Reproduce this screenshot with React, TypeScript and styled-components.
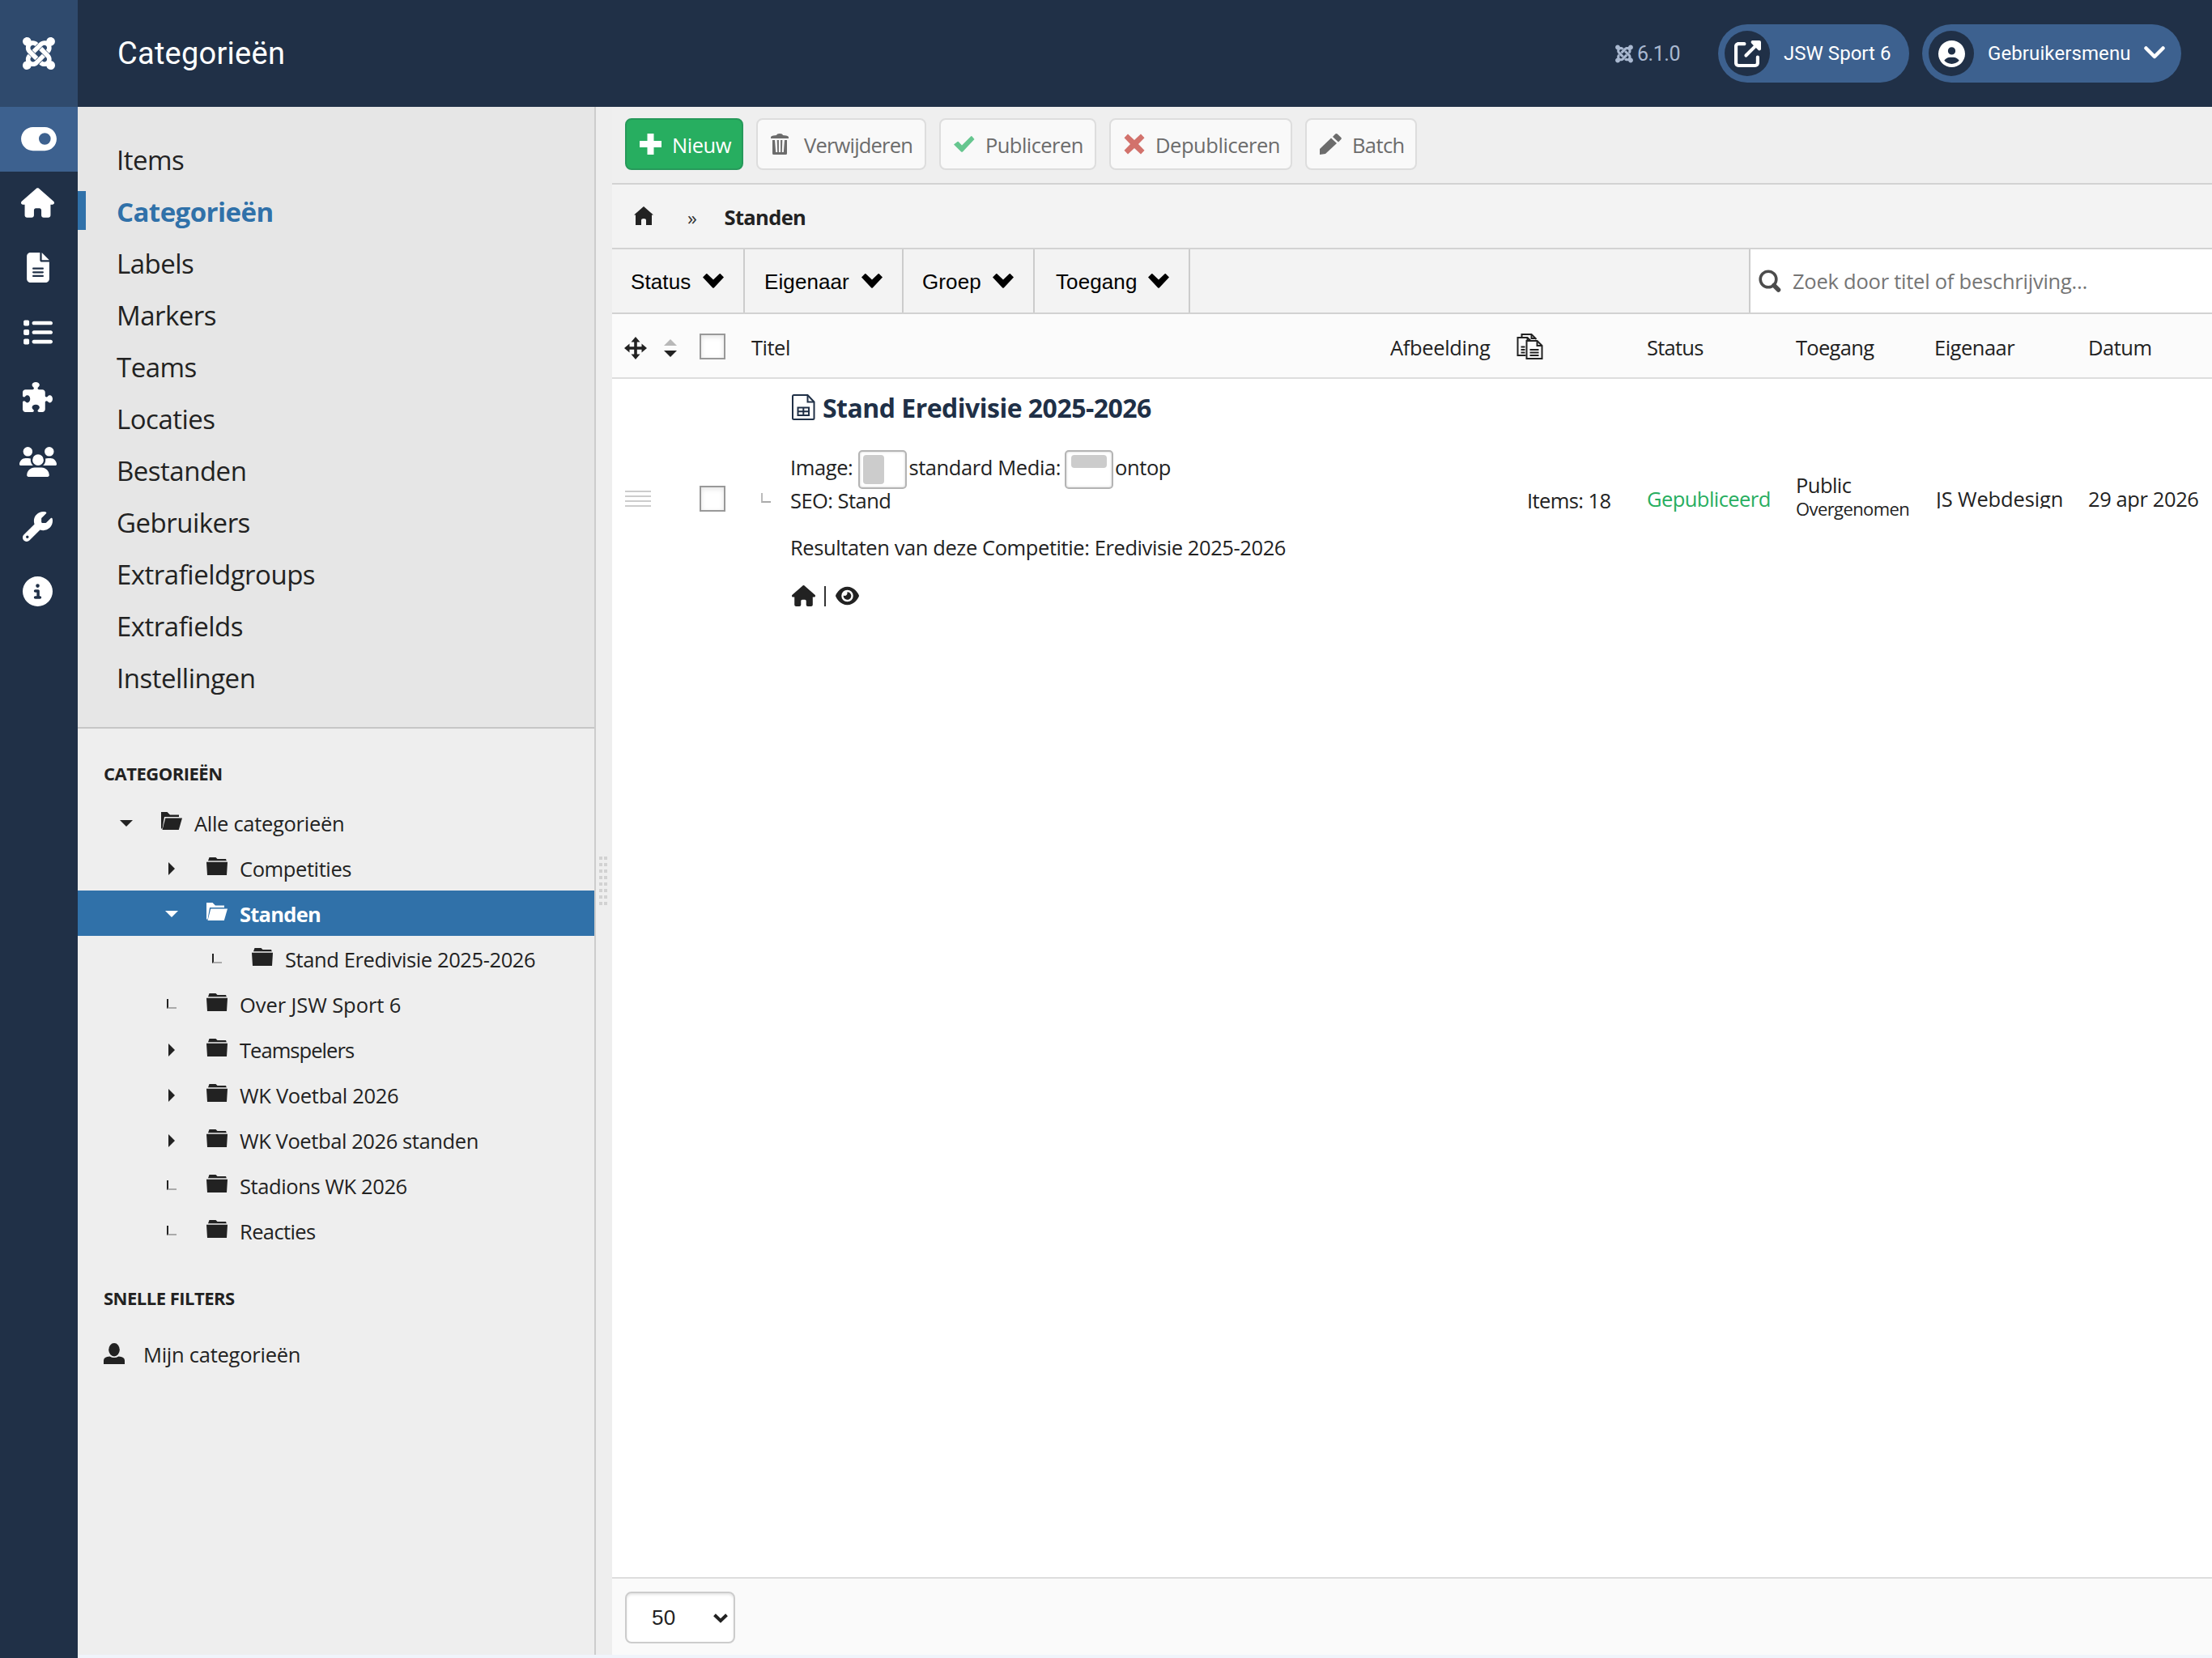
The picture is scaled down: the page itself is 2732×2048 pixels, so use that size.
import React from "react";
import styled, { createGlobalStyle, css } from "styled-components";
import {
  FaJoomla,
  FaToggleOn,
  FaHouse,
  FaFileLines,
  FaList,
  FaPuzzlePiece,
  FaUsers,
  FaWrench,
  FaCircleInfo,
  FaCircleUser,
  FaUpRightFromSquare,
  FaEye,
} from "react-icons/fa6";

const colors = {
  navy: "#203047",
  brand: "#2f4a6d",
  accent: "#3d618f",
  link: "#3071a9",
  text: "#222",
  line: "#ccc",
  soft: "#ddd",
  green: "#27ae60",
};

const GlobalStyle = createGlobalStyle`
  * { box-sizing: border-box; }
  body {
    margin: 0;
    background: #f0f4fb;
    color: ${colors.text};
    font-family: "Open Sans", "Noto Sans", sans-serif;
    font-size: 25.5px;
    letter-spacing: -0.4px;
    overflow: hidden;
  }
  svg { display: block; flex: none; }
`;

/* ---------- page shell ---------- */

const Page = styled.div`
  width: 2732px;
  height: 2048px;
  display: flex;
  flex-direction: column;
`;

const Header = styled.header`
  height: 132px;
  flex: none;
  display: flex;
  align-items: center;
  background: ${colors.navy};
  color: #fff;
  font-family: Roboto, sans-serif;
  letter-spacing: 0;
`;

const Brand = styled.div`
  width: 96px;
  height: 132px;
  display: flex;
  align-items: center;
  justify-content: center;
  background: ${colors.brand};
  svg { width: 40px; height: 46px; }
`;

const PageTitle = styled.h1`
  margin: 0 auto 0 49px;
  font-size: 38px;
  font-weight: 400;
  line-height: 132px;
  letter-spacing: 0.25px;
`;

const Version = styled.div`
  display: flex;
  align-items: center;
  gap: 5px;
  margin-right: 47px;
  color: #a9b8d0;
  font-size: 25px;
  letter-spacing: -0.45px;
  svg { width: 22px; height: 25px; }
`;

const Pill = styled.div<{ $width: number }>`
  width: ${(p) => p.$width}px;
  height: 72px;
  display: flex;
  align-items: center;
  margin-right: 16px;
  padding-left: 8px;
  border-radius: 36px;
  background: ${colors.accent};
  font-size: 24px;
  font-weight: 400;
  letter-spacing: 0.03px;
  &:last-child { margin-right: 38px; letter-spacing: 0.1px; }
`;

const PillIcon = styled.span`
  width: 56px;
  height: 56px;
  margin-right: 17px;
  display: flex;
  align-items: center;
  justify-content: center;
  border-radius: 50%;
  background: ${colors.navy};
  svg { width: 33px; height: 33px; }
`;

const Body = styled.div`
  flex: 1;
  min-height: 0;
  display: flex;
`;

const Rail = styled.nav`
  width: 96px;
  background: ${colors.navy};
  color: #fff;
`;

const RailItem = styled.div<{ $width: number; $active?: boolean }>`
  height: 80px;
  display: flex;
  align-items: center;
  justify-content: center;
  padding: 0 3px 4px 0;
  svg { width: ${(p) => p.$width}px; height: 37px; }
  ${(p) =>
    p.$active &&
    css`
      background: ${colors.accent};
      padding: 0 0 1px;
      svg { height: 39px; }
    `}
`;

/* ---------- sidebar ---------- */

const Shell = styled.div`
  flex: 1;
  min-width: 0;
  height: 1912px;
  display: flex;
  background: #eee;
`;

const Sidebar = styled.aside`
  width: 640px;
  border-right: 2px solid ${colors.line};
`;

const Submenu = styled.ul`
  height: 768px;
  margin: 0;
  padding: 32px 0 0;
  list-style: none;
  background: #e6e6e6;
  border-bottom: 2px solid #c6c6c6;
`;

const SubmenuItem = styled.li<{ $active?: boolean }>`
  height: 64px;
  display: flex;
  align-items: center;
  font-size: 33px;
  letter-spacing: -0.5px;
  line-height: 64px;
  span { margin-left: 48px; padding-top: 4px; }
  &::before {
    content: "";
    width: 0;
    height: 48px;
  }
  ${(p) =>
    p.$active &&
    css`
      color: ${colors.link};
      font-weight: 700;
      letter-spacing: -0.55px;
      span { margin-left: 38px; }
      &::before { width: 10px; background: ${colors.link}; }
    `}
`;

const GroupTitle = styled.h2`
  margin: 35px 0 0 32px;
  font-size: 22px;
  line-height: 40px;
  font-weight: 700;
  letter-spacing: -0.5px;
  text-transform: uppercase;
`;

const Tree = styled.ul`
  margin: 13px 0 0;
  padding: 0;
  list-style: none;
`;

const TreeRow = styled.li<{ $level: number; $active?: boolean }>`
  height: 56px;
  display: flex;
  align-items: center;
  padding-left: ${(p) => 46 + p.$level * 56}px;
  ${(p) =>
    p.$active &&
    css`
      background: ${colors.link};
      color: #fff;
      font-weight: 700;
    `}
`;

const TreeLabel = styled.span<{ $track?: number }>`
  padding-top: 2px;
  letter-spacing: ${(p) => p.$track ?? -0.4}px;
`;

const Toggle = styled.span`
  width: 28px;
  margin-right: 29px;
  padding-top: 1px;
  display: flex;
  justify-content: center;
`;

const TreeIcon = styled.span`
  width: 26px;
  margin: 0 15px 4px 0;
`;

const Elbow = styled.span<{ $muted?: boolean }>`
  width: 12px;
  height: 12px;
  margin-bottom: 2px;
  flex: none;
  border-left: 2px solid ${(p) => (p.$muted ? "#bbb" : "#222")};
  border-bottom: 2px solid #aaa;
`;

const QuickFilter = styled.div`
  height: 56px;
  margin-top: 21px;
  padding-left: 32px;
  display: flex;
  align-items: center;
  gap: 23px;
  letter-spacing: -0.25px;
  span { padding-top: 1px; }
`;

const Splitter = styled.div`
  width: 20px;
  display: flex;
  justify-content: center;
  padding: 926px 2px 0 0;
`;

const Grip = styled.div`
  width: 10px;
  height: 62px;
  display: grid;
  grid-template-columns: 4px 4px;
  grid-auto-rows: 4px;
  gap: 4px 2px;
  i { background: #d2d2d2; }
`;

/* ---------- main column ---------- */

const Main = styled.main`
  flex: 1;
  min-width: 0;
  display: flex;
  flex-direction: column;
  background: #fff;
`;

const Toolbar = styled.div`
  height: 96px;
  display: flex;
  gap: 16px;
  padding: 14px 16px 0;
  background: #efefef;
  border-bottom: 2px solid #d2d2d2;
`;

const ToolButton = styled.div<{ $width: number; $primary?: boolean; $gap: number; $track?: number }>`
  width: ${(p) => p.$width}px;
  height: 64px;
  display: flex;
  align-items: center;
  gap: ${(p) => p.$gap}px;
  padding-left: 16px;
  border: 2px solid ${(p) => (p.$primary ? "#26995a" : "#ddd")};
  border-radius: 8px;
  background: ${(p) => (p.$primary ? colors.green : "#f9f9f9")};
  color: ${(p) => (p.$primary ? "#fff" : "#6c6c6c")};
  letter-spacing: ${(p) => p.$track ?? -0.45}px;
  white-space: nowrap;
  span { padding-top: 1px; }
`;

const Breadcrumbs = styled.div`
  height: 80px;
  display: flex;
  align-items: center;
  padding: 0 0 1px 27px;
  background: #f3f3f3;
  border-bottom: 2px solid #d2d2d2;
  b { margin-left: 34px; letter-spacing: -0.65px; padding-top: 3px; }
`;

const Separator = styled.span`
  margin: 4px 0 0 42px;
  font-size: 24px;
  color: #333;
`;

const Filters = styled.div`
  height: 80px;
  display: flex;
  background: #f3f3f3;
  border-bottom: 2px solid #d2d2d2;
`;

const FilterButton = styled.div<{ $width: number; $pad: number }>`
  width: ${(p) => p.$width}px;
  display: flex;
  align-items: center;
  justify-content: space-between;
  padding: 3px 24px 0 ${(p) => p.$pad}px;
  border-right: 2px solid ${colors.line};
  color: #000;
  font-family: "Liberation Sans", Arial, sans-serif;
  font-size: 26px;
  letter-spacing: 0.1px;
  svg { margin-bottom: 3px; }
`;

const Search = styled.div`
  width: 572px;
  margin-left: auto;
  display: flex;
  align-items: center;
  gap: 14px;
  padding: 0 0 1px 10px;
  border-left: 2px solid ${colors.line};
  background: #fff;
  color: #757575;
  letter-spacing: -0.24px;
`;

const columns = css`
  display: grid;
  grid-template-columns: 108px 64px 789px 156px 161px 184px 171px 190px 1fr;
  align-items: center;
  white-space: nowrap;
`;

const HeadRow = styled.div`
  ${columns}
  height: 80px;
  padding-top: 1px;
  background: #fbfbfb;
  border-bottom: 2px solid ${colors.soft};
`;

const HeadCell = styled.div<{ $track?: number }>`
  padding-top: 2px;
  letter-spacing: ${(p) => p.$track ?? -0.5}px;
`;

const HandleHead = styled.div`
  display: flex;
  align-items: center;
  gap: 21px;
  padding: 4px 0 0 15px;
`;

const Checkbox = styled.span`
  display: block;
  width: 32px;
  height: 32px;
  border: 2px solid #999;
  background: #fff;
  box-shadow: inset 0 2px 6px #e4e4e4;
`;

const ItemRow = styled.div`
  ${columns}
  height: 296px;
`;

const DragHandle = styled.div`
  width: 32px;
  height: 20px;
  margin-left: 16px;
  background: repeating-linear-gradient(#ccc 0 2px, transparent 2px 6px);
`;

const TitleCell = styled.div`
  height: 296px;
  display: flex;
  align-items: center;
  gap: 24px;
  padding-left: 12px;
`;

const Stack = styled.div`
  height: 296px;
  padding-top: 15px;
`;

const ItemTitle = styled.div`
  height: 40px;
  display: flex;
  align-items: center;
  gap: 9px;
  margin-left: 2px;
  color: ${colors.navy};
  font-size: 32px;
  font-weight: 700;
  line-height: 40px;
  letter-spacing: -0.52px;
  span { padding-top: 2px; }
`;

const LayoutLine = styled.div`
  height: 48px;
  margin-top: 33px;
  display: flex;
  span { line-height: 43px; }
`;

const LayoutBox = styled.i<{ $top?: boolean }>`
  width: 60px;
  height: 48px;
  margin: 0 2px 0 ${(p) => (p.$top ? 5 : 7)}px;
  padding: ${(p) => (p.$top ? "4px 6px" : "4px")};
  border: 2px solid #b4b4b4;
  border-radius: 5px;
  background: #fff;
  box-shadow: inset 0 0 3px #ccc;
  &::before {
    content: "";
    display: block;
    width: ${(p) => (p.$top ? 44 : 26)}px;
    height: ${(p) => (p.$top ? 16 : 36)}px;
    border-radius: 4px;
    background: ${colors.line};
  }
`;

const TextLine = styled.div<{ $height: number; $gap?: number; $track?: number }>`
  height: ${(p) => p.$height}px;
  margin-top: ${(p) => p.$gap ?? 0}px;
  line-height: ${(p) => p.$height + 1}px;
  letter-spacing: ${(p) => p.$track ?? -0.41}px;
`;

const Links = styled.div`
  height: 40px;
  margin: 20px 0 0 2px;
  display: flex;
  align-items: center;
  gap: 11px;
  svg { width: 29px; height: 26px; }
`;

const Divider = styled.span`
  width: 2px;
  height: 25px;
  margin-right: 1px;
  background: #333;
`;

const CountCell = styled.div`
  padding: 4px 0 0 13px;
  letter-spacing: -0.6px;
`;

const StatusCell = styled.div`
  color: ${colors.green};
  letter-spacing: -0.56px;
`;

const AccessCell = styled.div`
  padding-bottom: 7px;
  line-height: 30px;
  letter-spacing: -0.55px;
  small { display: block; font-size: 22px; line-height: 28px; letter-spacing: -0.6px; }
`;

const OwnerCell = styled.div`
  height: 24px;
  padding-left: 2px;
  line-height: 24px;
  letter-spacing: -0.15px;
  overflow: hidden;
`;

const Footer = styled.footer`
  height: 96px;
  margin-top: auto;
  padding: 16px;
  background: #fafafa;
  border-top: 2px solid ${colors.soft};
`;

const PageSize = styled.div`
  width: 136px;
  height: 64px;
  display: flex;
  align-items: center;
  justify-content: space-between;
  padding: 1px 7px 0 31px;
  border: 2px solid ${colors.line};
  border-radius: 8px;
  background: #fff;
  box-shadow: inset 0 2px 3px #e6e6e6;
  font-family: "Liberation Sans", Arial, sans-serif;
  font-size: 26px;
  letter-spacing: 0.2px;
`;

/* ---------- icons ---------- */

const PillChevron = styled.svg`
  margin: 0 0 2px 16px;
`;

const Plus = () => (
  <svg width="27" height="26" viewBox="0 0 27 26" fill="currentColor">
    <path d="M9.500 0h8v9H27v8h-9.500v9h-8v-9H0V9h9.500z" />
  </svg>
);

const Trash = () => (
  <svg width="22" height="26" viewBox="0 0 22 26" fill="currentColor">
    <path d="M0 6V4.500Q0 3 3 2.500L7 2Q7.500 0 11 0t4 2l4 .5q3 .5 3 2V6z" />
    <path d="M2 8h3l1.200 15h2L7.700 8h2.200v15h2.200V8h2.200l-.5 15h2L17 8h3v16.500q0 1.500-1.500 1.500h-15Q2 26 2 24.500z" />
  </svg>
);

const Check = () => (
  <svg width="26" height="20" viewBox="0 0 26 20" fill="#66c68f">
    <path d="M0 10.500 4.500 7q.8-.6 1.500.2L10 11.500 21 .4q.8-.8 1.600 0L25.500 4 11.200 19.200q-1.200 1.200-2.300 0z" />
  </svg>
);

const Cross = () => (
  <svg width="26" height="26" viewBox="0 0 26 26" fill="#d2726c">
    <path d="M5 .5 13 8l8-7.500 4.500 4.700L18 13l7.500 7.800-4.500 4.700-8-7.500-8 7.500L.5 20.800 8 13 .5 5.200z" />
  </svg>
);

const Pencil = () => (
  <svg width="27" height="26" viewBox="0 0 27 26" fill="currentColor">
    <path d="M0 19 14 5.500l7 6.500L7 25l-7 1z" />
    <path d="m16 4 3.200-3.400q1.300-1.200 2.600 0l4.400 4.200q1.200 1.200 0 2.500L23 10.500z" />
  </svg>
);

const CrumbHome = () => (
  <svg width="24" height="23" viewBox="0 0 24 23" fill={colors.text}>
    <path d="M12 0 24 10.500h-2V23h-7v-6q0-2-3-2t-3 2v6H2V10.500H0z" />
  </svg>
);

const ThickChevron = () => (
  <svg width="26" height="18" viewBox="0 0 26 18" fill="#000">
    <path d="M4.200.3q.6-.5 1.200 0L13 7.500 20.600.3q.6-.5 1.200 0L26 4.400 13.800 17.500q-.8.700-1.600 0L0 4.400z" />
  </svg>
);

const SearchIcon = () => (
  <svg width="28" height="28" viewBox="0 0 28 28" fill="none" stroke="#4c4c4c">
    <circle cx="12" cy="12" r="9.800" strokeWidth="3.600" />
    <path d="m19 19.500 5.500 5.500" strokeWidth="5.500" strokeLinecap="round" />
  </svg>
);

const MoveIcon = () => (
  <svg width="28" height="28" viewBox="0 0 28 28" fill={colors.text}>
    <path d="M14 0 19.500 6.500H15.800V12.200H21.500V8.500L28 14l-6.500 5.500V15.800H15.800v5.700h3.700L14 28l-5.500-6.500h3.700V15.800H6.500v3.700L0 14l6.500-5.500v3.700h5.700V6.500H8.500z" />
  </svg>
);

const SortIcon = () => (
  <svg width="16" height="22" viewBox="0 0 16 22">
    <path d="M8 0 16 8H0z" fill="#b8b8b8" />
    <path d="M8 22 0 14h16z" fill={colors.text} />
  </svg>
);

const CopyIcon = () => (
  <svg width="33" height="32" viewBox="0 0 32 32" fill="none" stroke={colors.text} strokeWidth="2">
    <path d="M6 5V1h12l6 6" />
    <path d="M18 1v5h5" />
    <path d="M11 27H1V5h12l4 4M13 5v5" />
    <path d="M5 16.500h5M5 20h5M5 23.500h5" />
    <path d="M12 9h13l6 6v16H12z" fill="#fbfbfb" />
    <path d="M25 9v6h6M16 20h11M16 23.500h11M16 27h11" />
  </svg>
);

const SheetIcon = () => (
  <svg width="29" height="32" viewBox="0 0 29 32" fill="none" stroke={colors.navy} strokeWidth="2">
    <path d="M2.500 1H19.500L27.500 9.500V29.500Q27.500 31 26 31H2.500Q1 31 1 29.500V2.500Q1 1 2.500 1z" />
    <path d="M19.500 1v8.500h8M7.500 16.500h13.500v9.500H7.500zM7.500 21.300h13.500M14.300 16.500v9.500" />
  </svg>
);

const FolderClosed = () => (
  <svg width="26" height="22" viewBox="0 0 26 22" fill="currentColor">
    <path d="M2 4.200 3.500 0h8l2 2H24l.8 2.200z" />
    <path d="M0 5.800h26L25 22H1z" />
  </svg>
);

const FolderOpen = () => (
  <svg width="26" height="22" viewBox="0 0 26 22" fill="currentColor">
    <path d="M0 0h7.500l3.500 3.500h11V6H4L1.500 20.500H0z" />
    <path d="M5.300 7.500H26L21.800 22H1.500z" />
  </svg>
);

const CaretDown = () => (
  <svg width="16" height="8" viewBox="0 0 16 8" fill="currentColor">
    <path d="M0 0h16L8 8z" />
  </svg>
);

const CaretRight = () => (
  <svg width="8" height="16" viewBox="0 0 8 16" fill="currentColor">
    <path d="M0 0v16l8-8z" />
  </svg>
);

const Person = () => (
  <svg width="26" height="26" viewBox="0 0 26 26" fill="currentColor">
    <ellipse cx="13" cy="8.200" rx="6.800" ry="8.200" />
    <path d="M0 26v-4.500Q0 17 7.500 16.500q5.500 3 11 0Q26 17 26 21.500V26z" />
  </svg>
);

const SelectArrow = () => (
  <svg width="18" height="12" viewBox="0 0 18 12" fill="none" stroke={colors.text} strokeWidth="4">
    <path d="m1.500 1.700 7.500 7.300 7.500-7.300" />
  </svg>
);

/* ---------- data ---------- */

const railIcons = [
  { Icon: FaHouse, width: 41 },
  { Icon: FaFileLines, width: 28 },
  { Icon: FaList, width: 37 },
  { Icon: FaPuzzlePiece, width: 37 },
  { Icon: FaUsers, width: 46 },
  { Icon: FaWrench, width: 37 },
  { Icon: FaCircleInfo, width: 37 },
];

const submenu = [
  "Items",
  "Categorieën",
  "Labels",
  "Markers",
  "Teams",
  "Locaties",
  "Bestanden",
  "Gebruikers",
  "Extrafieldgroups",
  "Extrafields",
  "Instellingen",
];

type Node = {
  label: string;
  level: number;
  state: "open" | "closed" | "leaf";
  active?: boolean;
  track?: number;
};

const tree: Node[] = [
  { label: "Alle categorieën", level: 0, state: "open", track: -0.3 },
  { label: "Competities", level: 1, state: "closed" },
  { label: "Standen", level: 1, state: "open", active: true, track: -0.75 },
  { label: "Stand Eredivisie 2025-2026", level: 2, state: "leaf" },
  { label: "Over JSW Sport 6", level: 1, state: "leaf", track: -0.08 },
  { label: "Teamspelers", level: 1, state: "closed", track: -0.95 },
  { label: "WK Voetbal 2026", level: 1, state: "closed", track: -0.3 },
  { label: "WK Voetbal 2026 standen", level: 1, state: "closed" },
  { label: "Stadions WK 2026", level: 1, state: "leaf" },
  { label: "Reacties", level: 1, state: "leaf", track: -0.6 },
];

const filters = [
  { label: "Status", width: 164, pad: 23 },
  { label: "Eigenaar", width: 196, pad: 24 },
  { label: "Groep", width: 162, pad: 23 },
  { label: "Toegang", width: 192, pad: 26 },
];

export default function App() {
  return (
    <Page>
      <GlobalStyle />
      <Header>
        <Brand>
          <FaJoomla />
        </Brand>
        <PageTitle>Categorieën</PageTitle>
        <Version>
          <FaJoomla />
          6.1.0
        </Version>
        <Pill $width={236}>
          <PillIcon>
            <FaUpRightFromSquare />
          </PillIcon>
          JSW Sport 6
        </Pill>
        <Pill $width={320}>
          <PillIcon>
            <FaCircleUser />
          </PillIcon>
          Gebruikersmenu
          <PillChevron
            width="26"
            height="16"
            viewBox="0 0 26 16"
            fill="none"
            stroke="#fff"
            strokeWidth="4.500"
            strokeLinecap="round"
            strokeLinejoin="round"
          >
            <path d="m2.500 2.500 10.500 10.500 10.500-10.500" />
          </PillChevron>
        </Pill>
      </Header>

      <Body>
        <Rail>
          <RailItem $width={44} $active>
            <FaToggleOn />
          </RailItem>
          {railIcons.map(({ Icon, width }, i) => (
            <RailItem key={i} $width={width}>
              <Icon />
            </RailItem>
          ))}
        </Rail>

        <Shell>
          <Sidebar>
            <Submenu>
              {submenu.map((label) => (
                <SubmenuItem key={label} $active={label === "Categorieën"}>
                  <span>{label}</span>
                </SubmenuItem>
              ))}
            </Submenu>
            <GroupTitle>Categorieën</GroupTitle>
            <Tree>
              {tree.map((node) => (
                <TreeRow key={node.label} $level={node.level} $active={node.active}>
                  <Toggle>
                    {node.state === "open" && <CaretDown />}
                    {node.state === "closed" && <CaretRight />}
                    {node.state === "leaf" && <Elbow />}
                  </Toggle>
                  <TreeIcon>{node.state === "open" ? <FolderOpen /> : <FolderClosed />}</TreeIcon>
                  <TreeLabel $track={node.track}>{node.label}</TreeLabel>
                </TreeRow>
              ))}
            </Tree>
            <GroupTitle>Snelle filters</GroupTitle>
            <QuickFilter>
              <Person />
              <span>Mijn categorieën</span>
            </QuickFilter>
          </Sidebar>

          <Splitter>
            <Grip>
              {Array.from({ length: 16 }, (_, i) => (
                <i key={i} />
              ))}
            </Grip>
          </Splitter>

          <Main>
            <Toolbar>
              <ToolButton $width={146} $gap={13} $primary>
                <Plus />
                <span>Nieuw</span>
              </ToolButton>
              <ToolButton $width={210} $gap={19} $track={-0.8}>
                <Trash />
                <span>Verwijderen</span>
              </ToolButton>
              <ToolButton $width={194} $gap={13} $track={-0.56}>
                <Check />
                <span>Publiceren</span>
              </ToolButton>
              <ToolButton $width={226} $gap={13}>
                <Cross />
                <span>Depubliceren</span>
              </ToolButton>
              <ToolButton $width={138} $gap={13} $track={-0.6}>
                <Pencil />
                <span>Batch</span>
              </ToolButton>
            </Toolbar>

            <Breadcrumbs>
              <CrumbHome />
              <Separator>»</Separator>
              <b>Standen</b>
            </Breadcrumbs>

            <Filters>
              {filters.map((f) => (
                <FilterButton key={f.label} $width={f.width} $pad={f.pad}>
                  {f.label}
                  <ThickChevron />
                </FilterButton>
              ))}
              <Search>
                <SearchIcon />
                Zoek door titel of beschrijving…
              </Search>
            </Filters>

            <HeadRow>
              <HandleHead>
                <MoveIcon />
                <SortIcon />
              </HandleHead>
              <Checkbox />
              <HeadCell>Titel</HeadCell>
              <HeadCell $track={-0.34}>Afbeelding</HeadCell>
              <CopyIcon />
              <HeadCell $track={-0.75}>Status</HeadCell>
              <HeadCell $track={-0.7}>Toegang</HeadCell>
              <HeadCell>Eigenaar</HeadCell>
              <HeadCell>Datum</HeadCell>
            </HeadRow>

            <ItemRow>
              <DragHandle />
              <Checkbox />
              <TitleCell>
                <Elbow $muted />
                <Stack>
                  <ItemTitle>
                    <SheetIcon />
                    <span>Stand Eredivisie 2025-2026</span>
                  </ItemTitle>
                  <LayoutLine>
                    <span>Image:</span>
                    <LayoutBox />
                    <span>standard Media:</span>
                    <LayoutBox $top />
                    <span>ontop</span>
                  </LayoutLine>
                  <TextLine $height={28} $track={-0.55}>
                    SEO: Stand
                  </TextLine>
                  <TextLine $height={40} $gap={24}>
                    Resultaten van deze Competitie: Eredivisie 2025-2026
                  </TextLine>
                  <Links>
                    <FaHouse />
                    <Divider />
                    <FaEye />
                  </Links>
                </Stack>
              </TitleCell>
              <span />
              <CountCell>Items: 18</CountCell>
              <StatusCell>Gepubliceerd</StatusCell>
              <AccessCell>
                Public
                <small>Overgenomen</small>
              </AccessCell>
              <OwnerCell>JS Webdesign</OwnerCell>
              <div>29 apr 2026</div>
            </ItemRow>

            <Footer>
              <PageSize>
                50
                <SelectArrow />
              </PageSize>
            </Footer>
          </Main>
        </Shell>
      </Body>
    </Page>
  );
}
